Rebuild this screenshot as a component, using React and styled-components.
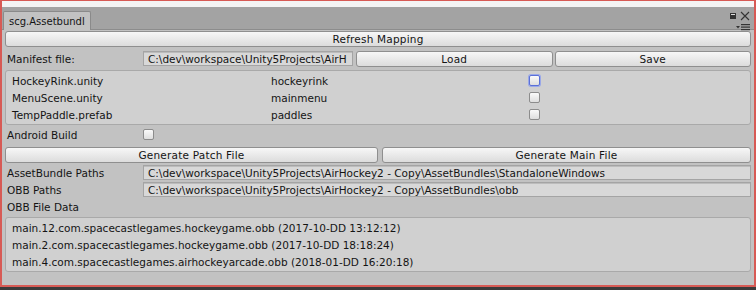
import React from 'react';
import styled, { createGlobalStyle } from 'styled-components';

const Global = createGlobalStyle`
  html, body { margin: 0; padding: 0; background: #3a3a3a; }
  body { width: 756px; height: 290px; overflow: hidden; }
  * { box-sizing: border-box; }
`;

const Frame = styled.div`
  width: 756px;
  height: 287px;
  border: 2px solid #d75a55;
  border-top-width: 1px;
  background: #c2c2c2;
  display: flex;
  flex-direction: column;
  font-family: "DejaVu Sans", Verdana, sans-serif;
  font-size: 10.5px;
  color: #141414;
`;

const TopStrip = styled.div`
  height: 6px;
  background: #f4f4f4;
`;

const TabBar = styled.div`
  height: 23px;
  background: #a3a3a3;
  display: flex;
  align-items: flex-end;
  padding-left: 1px;
  position: relative;
  border-bottom: 1px solid #8c8c8c;
`;

const Tab = styled.div`
  height: 19px;
  padding: 0 5px 0 5px;
  background: #c2c2c2;
  border: 1px solid #8a8a8a;
  border-bottom: none;
  border-radius: 2px 2px 0 0;
  display: flex;
  align-items: center;
  font-size: 10px;
  margin-bottom: -1px;
`;

const WinIcons = styled.div`
  position: absolute;
  right: 3px;
  top: 4px;
  display: flex;
  flex-direction: column;
  align-items: flex-end;
  gap: 2px;
`;

const Content = styled.div`
  flex: 1;
  padding: 1px 3px 0 3px;
  display: flex;
  flex-direction: column;
`;

const Button = styled.button`
  height: 16px;
  flex: ${p => p.$grow || 1} 1 0;
  border: 1px solid #8f8f8f;
  border-radius: 3px;
  background: linear-gradient(#f7f7f7, #dcdcdc);
  font-family: inherit;
  font-size: 10.5px;
  color: #141414;
  padding: 0;
  display: flex;
  align-items: center;
  justify-content: center;
  letter-spacing: 0.2px;
`;

const Row = styled.div`
  display: flex;
  align-items: center;
  gap: ${p => p.$gap || 0}px;
  height: ${p => p.$h || 17}px;
  margin-top: ${p => p.$mt || 0}px;
`;

const Label = styled.div`
  width: 138px;
  padding-left: 2px;
  flex-shrink: 0;
`;

const Field = styled.div`
  height: 15px;
  flex: ${p => p.$w ? 'none' : 1};
  width: ${p => p.$w ? p.$w + 'px' : 'auto'};
  background: #d8d8d8;
  border: 1px solid #a4a4a4;
  box-shadow: inset 0 1px 0 #bcbcbc;
  padding: 0 4px;
  display: flex;
  align-items: center;
  white-space: nowrap;
  overflow: hidden;
`;

const Box = styled.div`
  background: #d0d0d0;
  border: 1px solid #a9a9a9;
  border-radius: 3px;
  padding: 1px 4px;
  margin-top: ${p => p.$mt || 0}px;
  display: flex;
  flex-direction: column;
`;

const ListRow = styled.div`
  height: 17px;
  display: grid;
  grid-template-columns: 259px 258px 20px;
  align-items: center;
  padding-left: 2px;
`;

const Check = styled.div`
  width: 11px;
  height: 11px;
  border: 1px solid ${p => p.$focus ? '#5a70d8' : '#8c8c8c'};
  border-radius: 2px;
  background: linear-gradient(#fafafa, #dedede);
  box-shadow: ${p => p.$focus ? '0 0 0 1px #9aa8e8' : 'none'};
`;

const DataRow = styled.div`
  height: 17px;
  display: flex;
  align-items: center;
  padding-left: 2px;
`;

const ButtonPair = styled.div`
  flex: 1;
  display: flex;
  gap: 2px;
  margin-left: 3px;
`;

const scenes = [
  ['HockeyRink.unity', 'hockeyrink', true],
  ['MenuScene.unity', 'mainmenu', false],
  ['TempPaddle.prefab', 'paddles', false],
];

const obbs = [
  'main.12.com.spacecastlegames.hockeygame.obb (2017-10-DD 13:12:12)',
  'main.2.com.spacecastlegames.hockeygame.obb (2017-10-DD 18:18:24)',
  'main.4.com.spacecastlegames.airhockeyarcade.obb (2018-01-DD 16:20:18)',
];

export default function App() {
  return (
    <>
      <Global />
      <Frame>
        <TopStrip />
        <TabBar>
          <Tab>scg.Assetbundl</Tab>
          <WinIcons>
            <svg width="22" height="10" viewBox="0 0 22 10">
              <rect x="1" y="2" width="6" height="6" fill="#333" />
              <rect x="2" y="3" width="4" height="1" fill="#ddd" />
              <path d="M12 1 L20 9 M20 1 L12 9" stroke="#333" strokeWidth="1.1" />
            </svg>
            <svg width="15" height="8" viewBox="0 0 15 8">
              <path d="M0 3 L4 3 L2 5.5 Z" fill="#333" />
              <rect x="5" y="1" width="9" height="1.2" fill="#333" />
              <rect x="5" y="3.5" width="9" height="1.2" fill="#333" />
              <rect x="5" y="6" width="9" height="1.2" fill="#333" />
            </svg>
          </WinIcons>
        </TabBar>
        <Content>
          <Row $h={16}><Button>Refresh Mapping</Button></Row>
          <Row $mt={3}>
            <Label>Manifest file:</Label>
            <Field $w={210}>C:\dev\workspace\Unity5Projects\AirH</Field>
            <ButtonPair>
              <Button>Load</Button>
              <Button>Save</Button>
            </ButtonPair>
          </Row>
          <Box $mt={3}>
            {scenes.map(([n, b, f]) => (
              <ListRow key={n}>
                <span>{n}</span>
                <span>{b}</span>
                <Check $focus={f} />
              </ListRow>
            ))}
          </Box>
          <Row $mt={1}>
            <Label>Android Build</Label>
            <Check />
          </Row>
          <Row $gap={4} $mt={3}>
            <Button $grow={373}>Generate Patch File</Button>
            <Button $grow={369}>Generate Main File</Button>
          </Row>
          <Row $mt={1}>
            <Label>AssetBundle Paths</Label>
            <Field>C:\dev\workspace\Unity5Projects\AirHockey2 - Copy\AssetBundles\StandaloneWindows</Field>
          </Row>
          <Row>
            <Label>OBB Paths</Label>
            <Field>C:\dev\workspace\Unity5Projects\AirHockey2 - Copy\AssetBundles\obb</Field>
          </Row>
          <Row>
            <Label>OBB File Data</Label>
          </Row>
          <Box $mt={2}>
            {obbs.map(o => <DataRow key={o}>{o}</DataRow>)}
          </Box>
        </Content>
      </Frame>
    </>
  );
}
